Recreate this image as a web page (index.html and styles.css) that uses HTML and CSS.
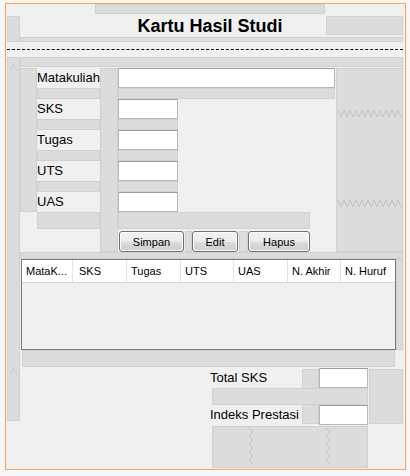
FILE: index.html
```html
<!DOCTYPE html>
<html>
<head>
<meta charset="utf-8">
<link rel="stylesheet" href="styles.css">
</head>
<body>
<div class="form">
  <div class="title-sec">
    <div class="gap tg-top"></div>
    <div class="gap tg-left"></div>
    <h1 class="title">Kartu Hasil Studi</h1>
    <div class="gap tg-right"></div>
    <div class="gap tg-bot"></div>
  </div>
  <div class="sep"></div>
  <div class="body">
    <div class="gap lstrip">
      <svg class="chev" width="13" height="364" viewBox="0 0 13 364"><polyline points="3,14 6.5,7 10,14" /><polyline points="3,318 6.5,311 10,318" /></svg>
    </div>
    <div class="main">
      <div class="gap topgap"></div>
      <div class="fields">
        <div class="gap f-strip"></div>
        <div class="gap f-vgap"></div>
        <div class="gap f-rgap">
          <svg class="zz" width="67" height="184" viewBox="0 0 67 184"><polyline points="2,42 5,49 8,42 11,49 14,42 17,49 20,42 23,49 26,42 29,49 32,42 35,49 38,42 41,49 44,42 47,49 50,42 53,49 56,42 59,49 62,42 65,49" /><polyline points="2,132 5,139 8,132 11,139 14,132 17,139 20,132 23,139 26,132 29,139 32,132 35,139 38,132 41,139 44,132 47,139 50,132 53,139 56,132 59,139 62,132 65,139" /></svg>
        </div>

        <div class="lbl r1">Matakuliah</div>
        <input class="tf tf-wide r1" type="text">
        <div class="gap lgap r2"></div>
        <div class="gap fgap-wide r2"></div>

        <div class="lbl r3">SKS</div>
        <input class="tf tf-sm r3" type="text">
        <div class="gap lgap r4"></div>
        <div class="gap fgap-sm r4"></div>

        <div class="lbl r5">Tugas</div>
        <input class="tf tf-sm r5" type="text">
        <div class="gap lgap r6"></div>
        <div class="gap fgap-sm r6"></div>

        <div class="lbl r7">UTS</div>
        <input class="tf tf-sm r7" type="text">
        <div class="gap lgap r8"></div>
        <div class="gap fgap-sm r8"></div>

        <div class="lbl r9">UAS</div>
        <input class="tf tf-sm r9" type="text">
        <div class="gap lgap r10"></div>
        <div class="gap fgap-btn r10"></div>

        <button class="btn b-simpan">Simpan</button>
        <div class="gap bgap1"></div>
        <button class="btn b-edit">Edit</button>
        <div class="gap bgap2"></div>
        <button class="btn b-hapus">Hapus</button>
      </div>
      <div class="gap tablegap"></div>
      <div class="table-row">
        <div class="table">
          <div class="thead">
            <div class="th c1">MataK...</div>
            <div class="th c2">SKS</div>
            <div class="th c3">Tugas</div>
            <div class="th c4">UTS</div>
            <div class="th c5">UAS</div>
            <div class="th c6">N. Akhir</div>
            <div class="th c7">N. Huruf</div>
          </div>
          <div class="tbody"></div>
        </div>
        <div class="gap tstrip"></div>
      </div>
      <div class="gap belowtable"></div>
      <div class="bottom">
        <div class="lbl b-l1">Total SKS</div>
        <div class="gap b-vgap"></div>
        <input class="tf b-f1" type="text">
        <div class="gap b-rgap"></div>
        <div class="gap b-bar"></div>
        <div class="lbl b-l2">Indeks Prestasi</div>
        <input class="tf b-f2" type="text">
        <div class="gap b-bgap">
          <svg class="zz" width="156" height="42" viewBox="0 0 156 42"><polyline points="37,2 41,6 37,10 41,14 37,18 41,22 37,26 41,30 37,34 41,38" /><polyline points="114,2 118,6 114,10 118,14 114,18 118,22 114,26 118,30 114,34 118,38" /></svg>
        </div>
      </div>
    </div>
  </div>
</div>
</body>
</html>
```
FILE: styles.css
```css
* { box-sizing: border-box; }

body {
  margin: 0;
  background: #f7f7fb;
  font-family: "Liberation Sans", Arial, sans-serif;
  color: #000;
}

.form {
  margin: 3px 0 0 5px;
  width: 401px;
  height: 467px;
  border: 1px solid #f3a860;
  background: #f0f0f0;
  box-shadow: 0 0 0 1px #fdf0e2;
}

.gap {
  background: #dcdcdc;
  box-shadow: inset 0 0 0 1px #d0d0d0;
}

/* title section */
.title-sec {
  display: grid;
  grid-template-columns: 1px 13px 75px 230px 1px 77px 2px;
  grid-template-rows: 10px 2px 19px 2px 5px;
}
.tg-top { grid-column: 4; grid-row: 1; }
.tg-left { grid-column: 2; grid-row: 3 / 6; }
.title {
  grid-column: 4;
  grid-row: 3 / 5;
  margin: 0;
  text-align: center;
  font-size: 18px;
  font-weight: bold;
  line-height: 21px;
}
.tg-right { grid-column: 6; grid-row: 3; }
.tg-bot { grid-column: 3 / 7; grid-row: 5; }

.sep {
  margin: 7px 2px 7px 1px;
  border-top: 1px dashed #000;
}

.body { display: flex; }
.lstrip {
  margin-left: 1px;
  width: 13px;
  height: 364px;
}
.chev { display: block; fill: none; stroke: #c9c9c9; stroke-width: 1; }
.main { width: 383px; }

.topgap { height: 10px; margin-bottom: 1px; }

/* fields grid */
.fields {
  display: grid;
  grid-template-columns: 17px 63px 18px 67px 7px 47px 9px 62px 26px 67px;
  grid-template-rows: 20px 11px 20px 11px 20px 11px 20px 11px 20px 17px 2px 21px;
}
.f-strip { grid-column: 1; grid-row: 1 / 10; }
.f-vgap { grid-column: 3; grid-row: 1 / 13; }
.f-rgap { grid-column: 10; grid-row: 1 / 13; }
.zz { display: block; fill: none; stroke: #c2c2c2; stroke-width: 1; }

.r1 { grid-row: 1; }
.r2 { grid-row: 2; }
.r3 { grid-row: 3; }
.r4 { grid-row: 4; }
.r5 { grid-row: 5; }
.r6 { grid-row: 6; }
.r7 { grid-row: 7; }
.r8 { grid-row: 8; }
.r9 { grid-row: 9; }
.r10 { grid-row: 10; }

.lbl {
  font-size: 13px;
  line-height: 20px;
  white-space: nowrap;
}
.fields .lbl { grid-column: 2; }
.lgap { grid-column: 2; }

.tf {
  display: block;
  margin: 0;
  padding: 0;
  height: 20px;
  background: #fff;
  border: 1px solid #b7b7b7;
  border-top-color: #9c9c9c;
  border-radius: 0;
  outline: none;
}
.tf-wide { grid-column: 4 / 10; margin-right: 1px; width: auto; }
.tf-sm { grid-column: 4; width: 60px; }
.fgap-wide { grid-column: 4 / 10; margin-right: 1px; }
.fgap-sm { grid-column: 4; width: 60px; }
.fgap-btn { grid-column: 4 / 9; }

.btn {
  grid-row: 12;
  margin: 0;
  padding: 0;
  height: 21px;
  font-family: "Liberation Sans", Arial, sans-serif;
  font-size: 11px;
  color: #000;
  border: 1px solid #707070;
  border-radius: 3px;
  background: linear-gradient(#f3f3f3 0%, #ebebeb 50%, #dddddd 51%, #cfcfcf 100%);
  box-shadow: inset 0 0 0 1px #fcfcfc;
}
.b-simpan { grid-column: 4; margin-left: 1px; margin-right: 1px; }
.bgap1 { grid-column: 5; grid-row: 12; }
.b-edit { grid-column: 6; margin-right: 1px; }
.bgap2 { grid-column: 7; grid-row: 12; }
.b-hapus { grid-column: 8; }

.tablegap { height: 7px; }

/* table */
.table-row { display: flex; }
.table {
  margin-left: 1px;
  width: 375px;
  height: 91px;
  border: 1px solid #7a7a7a;
  background: #f0f0f0;
}
.thead {
  display: flex;
  height: 23px;
  background: #fff;
  border-bottom: 1px solid #d5d5d5;
}
.th {
  font-size: 11px;
  line-height: 22px;
  padding-left: 4px;
  border-right: 1px solid #e3e3e3;
  white-space: nowrap;
  overflow: hidden;
}
.c1 { width: 51px; }
.c2 { width: 54px; padding-left: 6px; }
.c3 { width: 54px; }
.c4 { width: 53px; }
.c5 { width: 54px; }
.c6 { width: 53px; }
.c7 { width: 54px; border-right: none; }
.tstrip { width: 7px; height: 91px; }

.belowtable {
  margin-left: 2px;
  width: 373px;
  height: 17px;
  margin-bottom: 1px;
}

/* bottom */
.bottom {
  display: grid;
  grid-template-columns: 190px 2px 90px 17px 49px 1px 34px;
  grid-template-rows: 20px 17px 20px 1px 42px;
}
.b-l1 { grid-column: 2 / 4; grid-row: 1; }
.b-l2 { grid-column: 2 / 4; grid-row: 3; }
.b-vgap { grid-column: 4; grid-row: 1 / 4; margin: 1px 0 1px 0; }
.b-f1 { grid-column: 5; grid-row: 1; width: 49px; }
.b-f2 { grid-column: 5; grid-row: 3; width: 49px; }
.b-rgap { grid-column: 7; grid-row: 1 / 4; margin: 1px 0 1px 0; }
.b-bar { grid-column: 3 / 6; grid-row: 2; }
.b-bgap { grid-column: 3 / 6; grid-row: 5; }
```
